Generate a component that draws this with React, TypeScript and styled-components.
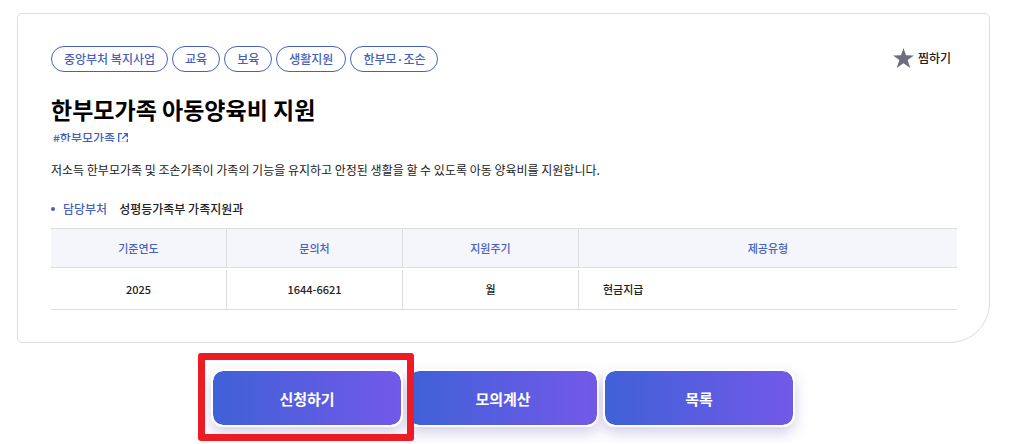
import React from "react";
import styled, { createGlobalStyle } from "styled-components";

const GlobalStyle = createGlobalStyle`
  *, *::before, *::after { box-sizing: border-box; }
  body {
    margin: 0;
    background: #fff;
    color: #222;
    font-family: "Noto Sans CJK KR", "Noto Sans", sans-serif;
    font-size: 12px;
    font-weight: 500;
    line-height: 18px;
  }
  button { font-family: inherit; cursor: pointer; }
`;

const Page = styled.main`
  padding: 13px 19px 16px 17px;
`;

const Card = styled.section`
  padding: 32px 32px 30px 33px;
  border: 1px solid #dddde0;
  border-radius: 5px 5px 40px 5px;
`;

const CardTop = styled.div`
  display: flex;
  justify-content: space-between;
  align-items: center;
`;

const TagList = styled.ul`
  display: flex;
  flex-wrap: wrap;
  gap: 4px;
  margin: 0;
  padding: 0;
  list-style: none;
`;

const Tag = styled.li`
  padding: 3px 12px;
  border: 1px solid #4661bd;
  border-radius: 13px;
  color: #4661bd;
`;

const FavoriteButton = styled.button`
  display: flex;
  align-items: center;
  gap: 4px;
  padding: 0 6px 2px;
  border: 0;
  background: none;
  color: #222;
  font-size: 12px;
  font-weight: 500;
  line-height: 18px;
`;

const Title = styled.h1`
  margin: 20px 0 0;
  color: #000;
  font-size: 23px;
  font-weight: 700;
  line-height: 34px;
`;

const HashTags = styled.div`
  display: flex;
  align-items: center;
  height: 9px;
  margin-top: 7px;
  padding-left: 2px;
  overflow: hidden;
`;

const HashLink = styled.a`
  display: flex;
  align-items: center;
  gap: 3px;
  color: #4661bd;
  text-decoration: none;
`;

const Summary = styled.p`
  margin: 19px 0 0;
  font-weight: 400;
`;

const Department = styled.dl`
  display: flex;
  align-items: center;
  margin: 21px 0 0;

  dt {
    display: flex;
    align-items: center;
    gap: 8px;
    color: #4661bd;
  }
  dt::before {
    content: "";
    width: 4px;
    height: 4px;
    border-radius: 2px;
    background: #4661bd;
  }
  dd { margin: 0 0 0 12px; }
`;

const InfoTable = styled.table`
  width: 100%;
  margin-top: 8px;
  table-layout: fixed;
  border-collapse: separate;
  border-spacing: 0 2px;
  font-size: 11px;
`;

const HeadCell = styled.th`
  width: 176px;
  height: 40px;
  padding: 0;
  border: solid #dddde0;
  border-width: 1px 1px 1px 0;
  background: #f5f6fb;
  color: #4661bd;
  font-weight: 500;

  &:last-child { width: auto; border-right: 0; }
`;

const Cell = styled.td<{ $align?: "left" | "center" }>`
  height: 40px;
  padding: 0 ${(p) => (p.$align === "left" ? "24px" : "0")} 2px;
  border: solid #dddde0;
  border-width: 0 1px 1px 0;
  text-align: ${(p) => p.$align ?? "center"};

  &:last-child { border-right: 0; }
`;

const Actions = styled.div`
  display: flex;
  flex-wrap: wrap;
  justify-content: center;
  gap: 4px;
  margin-top: 26px;
  padding-right: 1px;
`;

const ActionButton = styled.button<{ $marked?: boolean }>`
  position: relative;
  z-index: ${(p) => (p.$marked ? 1 : 0)};
  width: 192px;
  height: 58px;
  border: 2px solid #fff;
  border-radius: 12px;
  background: linear-gradient(90deg, #3f61d7, #7359e8) padding-box;
  box-shadow: 0 6px 14px rgba(84, 72, 180, 0.26);
  color: #fff;
  font-size: 15px;
  font-weight: 700;
`;

const Marker = styled.span`
  position: absolute;
  inset: -18px -13px -16px -15px;
  border: 7px solid #ed1c24;
  border-radius: 3px;
  pointer-events: none;
`;

const tags = ["중앙부처 복지사업", "교육", "보육", "생활지원", "한부모·조손"];
const actions = [
  { label: "신청하기", marked: true },
  { label: "모의계산", marked: false },
  { label: "목록", marked: false },
];

const StarIcon = () => (
  <svg width="21" height="20" viewBox="0 0 21 20" aria-hidden="true">
    <path
      d="M10.5 0 13 7.3 21 7.4 14.6 12.1 17.3 20 10.5 15.3 3.7 20 6.4 12.1 0 7.4 8 7.3Z"
      fill="#6e6c80"
    />
  </svg>
);

const ExternalIcon = () => (
  <svg
    width="10"
    height="10"
    viewBox="0 0 10 10"
    fill="none"
    stroke="#4661bd"
    strokeWidth="1.3"
    aria-hidden="true"
  >
    <path d="M4 .7H.7v8.6h8.6V6M5.8.7h3.5v3.5M9.1.9 4.3 5.7" />
  </svg>
);

export default function App() {
  return (
    <>
      <GlobalStyle />
      <Page>
        <Card>
          <CardTop>
            <TagList>
              {tags.map((tag) => (
                <Tag key={tag}>{tag}</Tag>
              ))}
            </TagList>
            <FavoriteButton type="button">
              <StarIcon />
              찜하기
            </FavoriteButton>
          </CardTop>
          <Title>한부모가족 아동양육비 지원</Title>
          <HashTags>
            <HashLink href="#single-parent">
              #한부모가족
              <ExternalIcon />
            </HashLink>
          </HashTags>
          <Summary>
            저소득 한부모가족 및 조손가족이 가족의 기능을 유지하고 안정된 생활을 할 수 있도록 아동 양육비를 지원합니다.
          </Summary>
          <Department>
            <dt>담당부처</dt>
            <dd>성평등가족부 가족지원과</dd>
          </Department>
          <InfoTable>
            <thead>
              <tr>
                <HeadCell scope="col">기준연도</HeadCell>
                <HeadCell scope="col">문의처</HeadCell>
                <HeadCell scope="col">지원주기</HeadCell>
                <HeadCell scope="col">제공유형</HeadCell>
              </tr>
            </thead>
            <tbody>
              <tr>
                <Cell>2025</Cell>
                <Cell>1644-6621</Cell>
                <Cell>월</Cell>
                <Cell $align="left">현금지급</Cell>
              </tr>
            </tbody>
          </InfoTable>
        </Card>
        <Actions>
          {actions.map(({ label, marked }) => (
            <ActionButton key={label} type="button" $marked={marked}>
              {label}
              {marked && <Marker />}
            </ActionButton>
          ))}
        </Actions>
      </Page>
    </>
  );
}
